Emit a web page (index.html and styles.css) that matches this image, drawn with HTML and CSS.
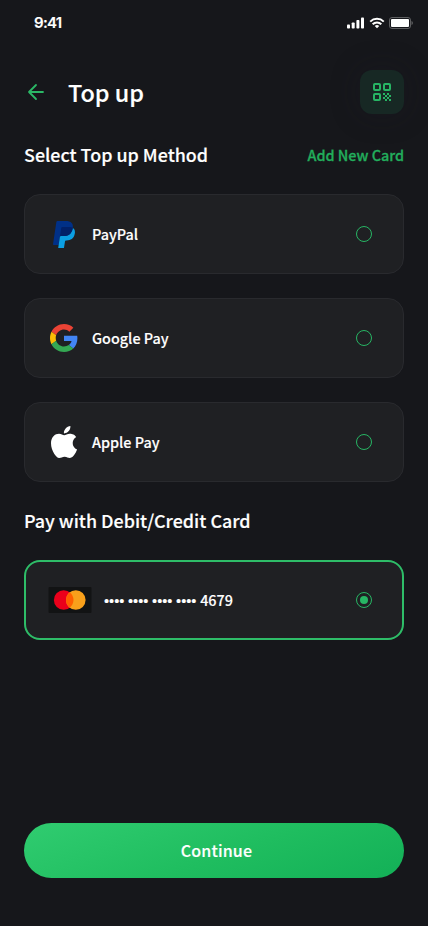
FILE: index.html
```html
<!DOCTYPE html>
<html lang="en">
<head>
<meta charset="utf-8">
<meta name="viewport" content="width=device-width, initial-scale=1">
<title>Top up</title>
<link rel="stylesheet" href="styles.css">
</head>
<body>
<div class="screen">
  <div class="status">
    <span class="time">9:41</span>
    <div class="indicators">
      <svg width="18" height="12" viewBox="0 0 18 12" fill="#fff"><rect x="0" y="7.500" width="3" height="4" rx=".8"/><rect x="4.700" y="5.500" width="3" height="6" rx=".8"/><rect x="9.400" y="3" width="3" height="8.500" rx=".8"/><rect x="14" y="0.500" width="3" height="11" rx=".8"/></svg>
      <svg width="16" height="12" viewBox="0 0 17 12" fill="none" stroke="#fff" stroke-width="2.100"><path d="M1.300 4.500a10.300 10.300 0 0 1 14.400 0M3.900 7.300a6.500 6.500 0 0 1 9.200 0"/><path d="M8.500 11.700 6.100 9.300a3.500 3.500 0 0 1 4.800 0z" fill="#fff" stroke="none"/></svg>
      <svg width="25" height="12" viewBox="0 0 25 12"><rect x=".5" y=".5" width="21" height="11" rx="2.500" fill="none" stroke="#5e5f61"/><rect x="2" y="2" width="18" height="8" rx="1" fill="#fff"/><path d="M22.500 4v4c.8-.3 1.400-1.100 1.400-2s-.6-1.700-1.400-2z" fill="#5e5f61"/></svg>
    </div>
  </div>

  <header class="header">
    <svg class="back" width="24" height="24" viewBox="0 0 24 24" fill="none" stroke="#2bb866" stroke-width="1.800" stroke-linecap="round" stroke-linejoin="round"><path d="M19 12H5M12 5l-7 7 7 7"/></svg>
    <h1>Top up</h1>
    <div class="scan">
      <svg width="24" height="24" viewBox="0 0 24 24" fill="none" stroke="#27b564" stroke-width="2"><rect x="4" y="4" width="6" height="6" rx="1"/><rect x="14" y="4" width="6" height="6" rx="1"/><rect x="4" y="14" width="6" height="6" rx="1"/><path fill="#27b564" stroke="none" d="M13 13h2v2h-2zM17 13h2v2h-2zM15 15h2v2h-2zM19 15h2v2h-2zM13 17h2v2h-2zM17 17h2v2h-2zM15 19h2v2h-2zM19 19h2v2h-2z"/></svg>
    </div>
  </header>

  <div class="section-head">
    <h2>Select Top up Method</h2>
    <a class="add">Add New Card</a>
  </div>

  <div class="methods">
    <div class="card">
      <span class="logo"><svg width="22" height="27" viewBox="0 0 256 302" preserveAspectRatio="none"><path fill="#003087" d="M217.168 23.507C203.234 7.625 178.046.816 145.823.816h-93.520A13.390 13.390 0 0 0 39.076 12.110L.136 259.077c-.774 4.870 2.997 9.280 7.933 9.280h57.736l14.500-91.971c1.033-6.501 6.143-8.416 12.727-8.416h27.436c53.898 0 96.101-21.892 108.429-85.221.366-1.873.683-3.696.957-5.477 3.671-23.407-.025-39.340-12.686-53.765"/><path fill="#0b9fe3" d="M228.897 82.749c-12.328 63.320-54.530 85.221-108.429 85.221H93.024c-6.584 0-12.145 4.795-13.168 11.296L60.500 301.745h67l12-73.800a11.710 11.710 0 0 1 11.562-9.880h7.284c47.147 0 84.064-19.154 94.852-74.550 4.503-23.150 2.173-42.478-9.739-56.054-3.613-4.112-8.100-7.508-13.327-10.280z"/><path fill="#012169" d="M229.854 77.272a89 89 0 0 0-18.720-6.634c-9.500-2-19.500-2.939-30.367-2.939h-73.309a11.570 11.570 0 0 0-11.563 9.889l-16.032 101.678c1.025-6.501 6.585-11.296 13.170-11.296h27.444c53.898 0 96.100-21.892 108.428-85.221z"/></svg></span>
      <span class="name">PayPal</span>
      <span class="radio"></span>
    </div>
    <div class="card">
      <span class="logo"><svg width="28" height="28" viewBox="0 0 48 48"><path fill="#ea4335" d="M24 9.500c3.540 0 6.710 1.220 9.210 3.600l6.850-6.850C35.900 2.380 30.470 0 24 0 14.620 0 6.510 5.380 2.560 13.220l7.980 6.190C12.430 13.720 17.740 9.500 24 9.500z"/><path fill="#4285f4" d="M46.980 24.550c0-1.570-.15-3.090-.38-4.550H24v9.020h12.940c-.58 2.960-2.260 5.480-4.780 7.180l7.730 6c4.510-4.180 7.090-10.360 7.090-17.650z"/><path fill="#fbbc05" d="M10.530 28.590c-.48-1.450-.76-2.990-.76-4.590s.27-3.140.76-4.590l-7.980-6.190C.92 16.460 0 20.120 0 24c0 3.880.92 7.540 2.560 10.780l7.970-6.190z"/><path fill="#34a853" d="M24 48c6.480 0 11.930-2.130 15.890-5.810l-7.730-6c-2.150 1.450-4.920 2.300-8.160 2.300-6.260 0-11.570-4.220-13.470-9.910l-7.980 6.190C6.510 42.620 14.620 48 24 48z"/></svg></span>
      <span class="name">Google Pay</span>
      <span class="radio"></span>
    </div>
    <div class="card">
      <span class="logo"><svg width="26" height="32" viewBox="0 0 814 1000" fill="#fff"><path d="M788.100 340.900c-5.800 4.500-108.200 62.200-108.200 190.500 0 148.400 130.300 200.900 134.200 202.200-.6 3.200-20.700 71.900-68.700 141.900-42.800 61.600-87.500 123.100-155.500 123.100s-85.500-39.500-164-39.500c-76.500 0-103.700 40.800-165.900 40.800s-105.600-57-155.500-127C46.700 790.700 0 663 0 541.800c0-194.400 126.400-297.500 250.800-297.500 66.100 0 121.200 43.400 162.700 43.400 39.500 0 101.100-46 176.300-46 28.500 0 130.900 2.600 198.300 99.200zm-234-181.500c31.100-36.900 53.100-88.100 53.100-139.300 0-7.100-.6-14.300-1.900-20.100-50.600 1.900-110.800 33.700-147.100 75.800-28.500 32.400-55.100 83.600-55.100 135.500 0 7.800 1.300 15.600 1.900 18.100 3.200.6 8.400 1.300 13.600 1.300 45.400 0 102.500-30.400 135.500-71.300z"/></svg></span>
      <span class="name">Apple Pay</span>
      <span class="radio"></span>
    </div>
  </div>

  <h2 class="pay-title">Pay with Debit/Credit Card</h2>
  <div class="card selected">
    <svg class="mc" width="44" height="26" viewBox="0 0 44 26"><rect x=".5" width="43" height="26" rx="1" fill="#121314"/><circle cx="15.700" cy="13" r="9.800" fill="#eb001b"/><circle cx="27.800" cy="13" r="9.800" fill="#f9a01b"/><path d="M21.750 5.300a9.800 9.800 0 0 1 0 15.400 9.800 9.800 0 0 1 0-15.400z" fill="#ff5f00"/></svg>
    <span class="name"><span class="dots">•••• •••• •••• •••• </span>4679</span>
    <span class="radio on"></span>
  </div>

  <button class="continue">Continue</button>
</div>
</body>
</html>
```
FILE: styles.css
```css
* { box-sizing: border-box; }
body { margin: 0; background: #16171b; }
.screen {
  width: 428px;
  height: 926px;
  padding: 0 24px 48px;
  display: flex;
  flex-direction: column;
  color: #fff;
  font-family: "Noto Sans CJK SC", "Noto Sans", sans-serif;
  font-weight: 500;
  -webkit-text-stroke: .15px;
}
.status {
  height: 46px;
  margin: 0 -10px 0 10px;
  display: flex;
  justify-content: space-between;
  align-items: center;
}
.time { font: 600 15px/20px Inter, sans-serif; letter-spacing: -0.7px; margin-top: -1px; }
.indicators { display: flex; align-items: center; gap: 4px; }
.indicators svg { display: block; }
.header {
  height: 44px;
  margin-top: 24px;
  display: flex;
  align-items: center;
}
.back { margin-right: 20px; }
h1, h2 { margin: 0; font-weight: 500; }
h1 { font-size: 23.4px; line-height: 32px; flex: 1; }
.scan {
  width: 44px;
  height: 44px;
  border-radius: 12px;
  background: #172824;
  box-shadow: 0 0 30px rgba(30, 25, 40, .3);
  display: grid;
  place-items: center;
}
.section-head {
  height: 28px;
  margin-top: 26px;
  display: flex;
  justify-content: space-between;
  align-items: center;
}
h2 { font-size: 17.9px; line-height: 28px; }
.add { font-size: 14.4px; line-height: 28px; color: #22ad5c; -webkit-text-stroke: .3px; padding-top: 2px; }
.methods {
  margin-top: 26px;
  display: flex;
  flex-direction: column;
  gap: 24px;
}
.card {
  height: 80px;
  padding: 0 31px 0 23px;
  display: flex;
  align-items: center;
  border: 1px solid #292a2e;
  border-radius: 16px;
  background: #1f2023;
}
.logo { width: 32px; margin-right: 12px; display: grid; place-items: center; }
.name { flex: 1; font-size: 14.4px; line-height: 24px; white-space: nowrap; }
.dots {
  font-family: "Liberation Sans", sans-serif;
  font-size: 14.5px;
  word-spacing: -.3px;
  white-space: pre;
}
.radio {
  width: 16px;
  height: 16px;
  border: 1px solid #27b564;
  border-radius: 50%;
  display: grid;
  place-items: center;
}
.radio.on::before {
  content: "";
  width: 8px;
  height: 8px;
  border-radius: 50%;
  background: #27b564;
}
.pay-title { margin-top: 24px; }
.selected {
  margin-top: 26px;
  padding: 0 30px 0 22px;
  border: 2px solid #2ebd68;
}
.mc { margin-right: 12px; }
.continue {
  margin-top: auto;
  height: 55px;
  padding: 0 0 2px 5px;
  border: 0;
  border-radius: 28px;
  background: linear-gradient(160deg, #30cc70 0%, #1fbd5f 55%, #13b057 100%);
  color: #fff;
  font: inherit;
  font-size: 16px;
  letter-spacing: .15px;
}
```
